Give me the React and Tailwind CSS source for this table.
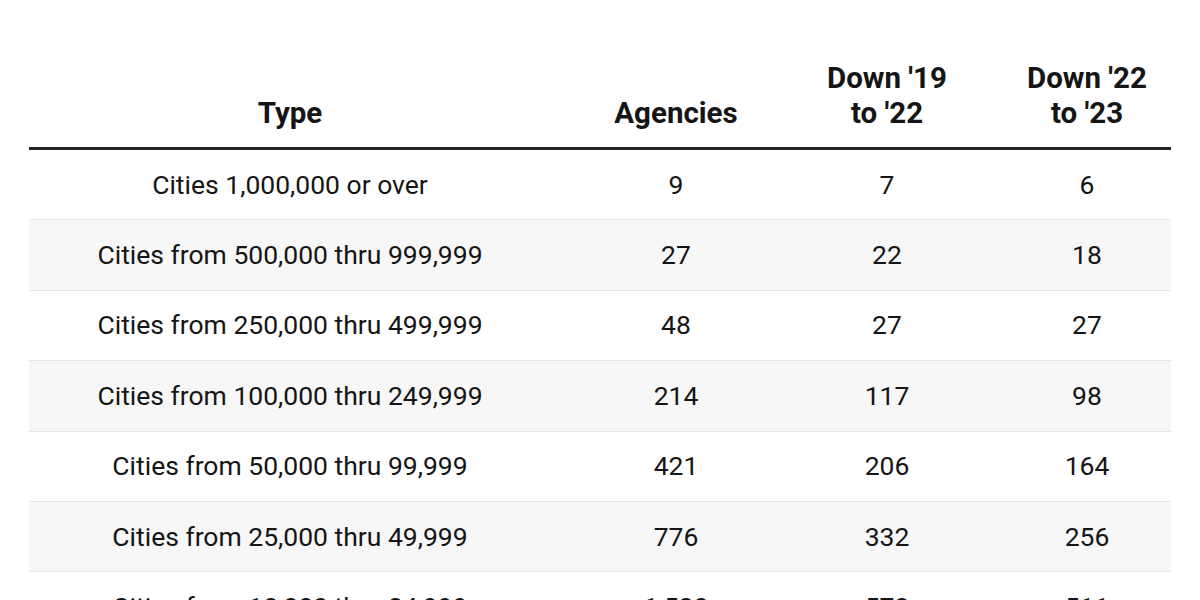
import React from "react";

const rows = [
  ["Cities 1,000,000 or over", "9", "7", "6"],
  ["Cities from 500,000 thru 999,999", "27", "22", "18"],
  ["Cities from 250,000 thru 499,999", "48", "27", "27"],
  ["Cities from 100,000 thru 249,999", "214", "117", "98"],
  ["Cities from 50,000 thru 99,999", "421", "206", "164"],
  ["Cities from 25,000 thru 49,999", "776", "332", "256"],
  ["Cities from 10,000 thru 24,999", "1,520", "573", "511"],
];

export default function App() {
  return (
    <div className="w-[1200px] h-[600px] overflow-hidden bg-white text-[#151515]" style={{ fontFamily: "Roboto, 'Liberation Sans', sans-serif" }}>
      <div className="pt-[61px] pl-[29px] w-[1171px]">
        <div className="grid grid-cols-[522px_250px_172px_198px] items-end border-b-[3px] border-[#222] pb-[16px] text-[29.5px] font-bold leading-[35px] text-center">
          <div>Type</div>
          <div>Agencies</div>
          <div>Down '19<br />to '22</div>
          <div className="pl-[30px]">Down '22<br />to '23</div>
        </div>
        {rows.map((r, i) => (
          <div
            key={i}
            className={`grid grid-cols-[522px_250px_172px_198px] items-center h-[70.4px] border-b border-[#e6e6e6] text-[26.5px] leading-[32px] text-center ${i % 2 === 1 ? "bg-[#f7f7f7]" : "bg-white"}`}
          >
            <div>{r[0]}</div>
            <div>{r[1]}</div>
            <div>{r[2]}</div>
            <div className="pl-[30px]">{r[3]}</div>
          </div>
        ))}
      </div>
    </div>
  );
}
